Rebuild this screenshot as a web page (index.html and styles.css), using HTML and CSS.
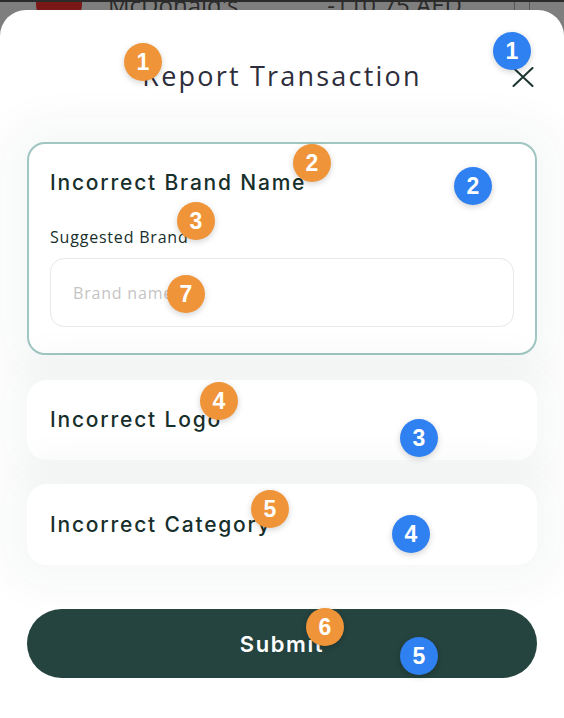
FILE: index.html
```html
<!DOCTYPE html>
<html lang="en">
<head>
<meta charset="utf-8">
<title>Report Transaction</title>
<link rel="stylesheet" href="styles.css">
</head>
<body>
<div class="under">
  <div class="under-row">
    <span class="under-logo"></span>
    <span class="under-name">McDonald's</span>
    <span class="under-amount">-110.75 AED</span>
    <span class="under-icon"></span>
  </div>
</div>
<div class="sheet">
  <header class="sheet-head">
    <h1 class="sheet-title">Report Transaction</h1>
    <button class="close" aria-label="Close">
      <svg width="22" height="20" viewBox="0 0 22 20"><path d="M1.5 1 L20.5 19 M20.5 1 L1.5 19" stroke="#1c3531" stroke-width="2" fill="none" stroke-linecap="round"/></svg>
    </button>
  </header>
  <div class="options">
    <section class="card card-active">
      <h2 class="card-title">Incorrect Brand Name</h2>
      <label class="field-label" for="brand">Suggested Brand</label>
      <input id="brand" class="field" type="text" placeholder="Brand name">
    </section>
    <section class="card card-plain"><h2 class="card-title">Incorrect Logo</h2></section>
    <section class="card card-plain"><h2 class="card-title">Incorrect Category</h2></section>
    <button class="submit">Submit</button>
  </div>

  <span class="badge orange" style="left:124px;top:33px">1</span>
  <span class="badge blue" style="left:493px;top:22px">1</span>
  <span class="badge orange" style="left:293px;top:134px">2</span>
  <span class="badge blue" style="left:454px;top:157px">2</span>
  <span class="badge orange" style="left:177px;top:192px">3</span>
  <span class="badge orange" style="left:167px;top:265px">7</span>
  <span class="badge orange" style="left:200px;top:372px">4</span>
  <span class="badge blue" style="left:400px;top:409px">3</span>
  <span class="badge orange" style="left:251px;top:480px">5</span>
  <span class="badge blue" style="left:392px;top:505px">4</span>
  <span class="badge orange" style="left:306px;top:598px">6</span>
  <span class="badge blue" style="left:400px;top:627px">5</span>
</div>
</body>
</html>
```
FILE: styles.css
```css
* { box-sizing: border-box; }
html, body { margin: 0; padding: 0; }
body {
  width: 564px;
  height: 718px;
  overflow: hidden;
  background: #7e7e7e;
  font-family: "Open Sans", "Noto Sans", sans-serif;
}
.under {
  height: 10px;
  overflow: hidden;
  border-top: 2px solid #2b2b2b;
}
.under-row {
  display: flex;
  align-items: center;
  margin-top: -22px;
  height: 48px;
  padding-left: 36px;
}
.under-logo {
  width: 46px;
  height: 46px;
  border-radius: 50%;
  background: #7a1818;
}
.under-name {
  margin-left: 26px;
  font-size: 24px;
  color: #2a2a2a;
}
.under-amount {
  margin-left: auto;
  font-size: 24px;
  color: #2a2a2a;
}
.under-icon {
  width: 16px;
  height: 20px;
  border: 1px solid #555;
  margin: 0 34px 0 52px;
}
.sheet {
  position: relative;
  height: 708px;
  background: #fff;
  border-radius: 26px 26px 0 0;
}
.sheet-head {
  position: relative;
  padding-top: 50px;
  height: 82px;
}
.sheet-title {
  margin: 0;
  text-align: center;
  font-weight: 400;
  font-size: 27px;
  letter-spacing: 2.2px;
  line-height: 32px;
  color: #2e2d3b;
}
.close {
  position: absolute;
  right: 30px;
  top: 57px;
  width: 22px;
  height: 20px;
  padding: 0;
  border: 0;
  background: none;
  display: flex;
}
.options {
  padding: 50px 27px 0 27px;
  display: flex;
  flex-direction: column;
}
.card {
  background: #fff;
  box-shadow: 0 0 40px 24px rgba(20, 50, 50, 0.035);
}
.card-active {
  height: 213px;
  border: 2px solid #9fc6c1;
  border-radius: 18px;
  padding: 25px 21px 0 21px;
  display: flex;
  flex-direction: column;
}
.card-plain {
  height: 80px;
  margin-top: 25px;
  border-radius: 20px;
  padding-left: 23px;
  display: flex;
  align-items: center;
}
.card-plain + .card-plain { margin-top: 24px; height: 81px; }
.card-title {
  margin: 0;
  font-family: Inter, "Open Sans", sans-serif;
  font-size: 21px;
  font-weight: 500;
  letter-spacing: 1.8px;
  line-height: 28px;
  color: #172f2b;
}
.field-label {
  margin-top: 29px;
  font-size: 16px;
  letter-spacing: 0.8px;
  line-height: 22px;
  color: #172f2b;
}
.field {
  margin-top: 10px;
  height: 69px;
  width: 100%;
  border: 1px solid #e5e9e8;
  border-radius: 14px;
  padding: 0 22px;
  font-family: inherit;
  font-size: 16px;
  letter-spacing: 0.8px;
  color: #172f2b;
  outline: none;
}
.field::placeholder { color: #c4c4c4; }
.submit {
  margin-top: 44px;
  height: 69px;
  border: 0;
  border-radius: 35px;
  background: #25433f;
  color: #fff;
  font-family: Inter, "Open Sans", sans-serif;
  font-size: 22px;
  letter-spacing: 1.6px;
  font-weight: 600;
}
.badge {
  position: absolute;
  width: 38px;
  height: 38px;
  border-radius: 50%;
  display: flex;
  align-items: center;
  justify-content: center;
  color: #fff;
  font-family: "Liberation Sans", Arial, sans-serif;
  font-weight: 700;
  font-size: 23px;
  box-shadow: 0 2px 6px rgba(0, 0, 0, 0.18);
}
.orange { background: #ef9438; }
.blue { background: #2f80f0; }
```
